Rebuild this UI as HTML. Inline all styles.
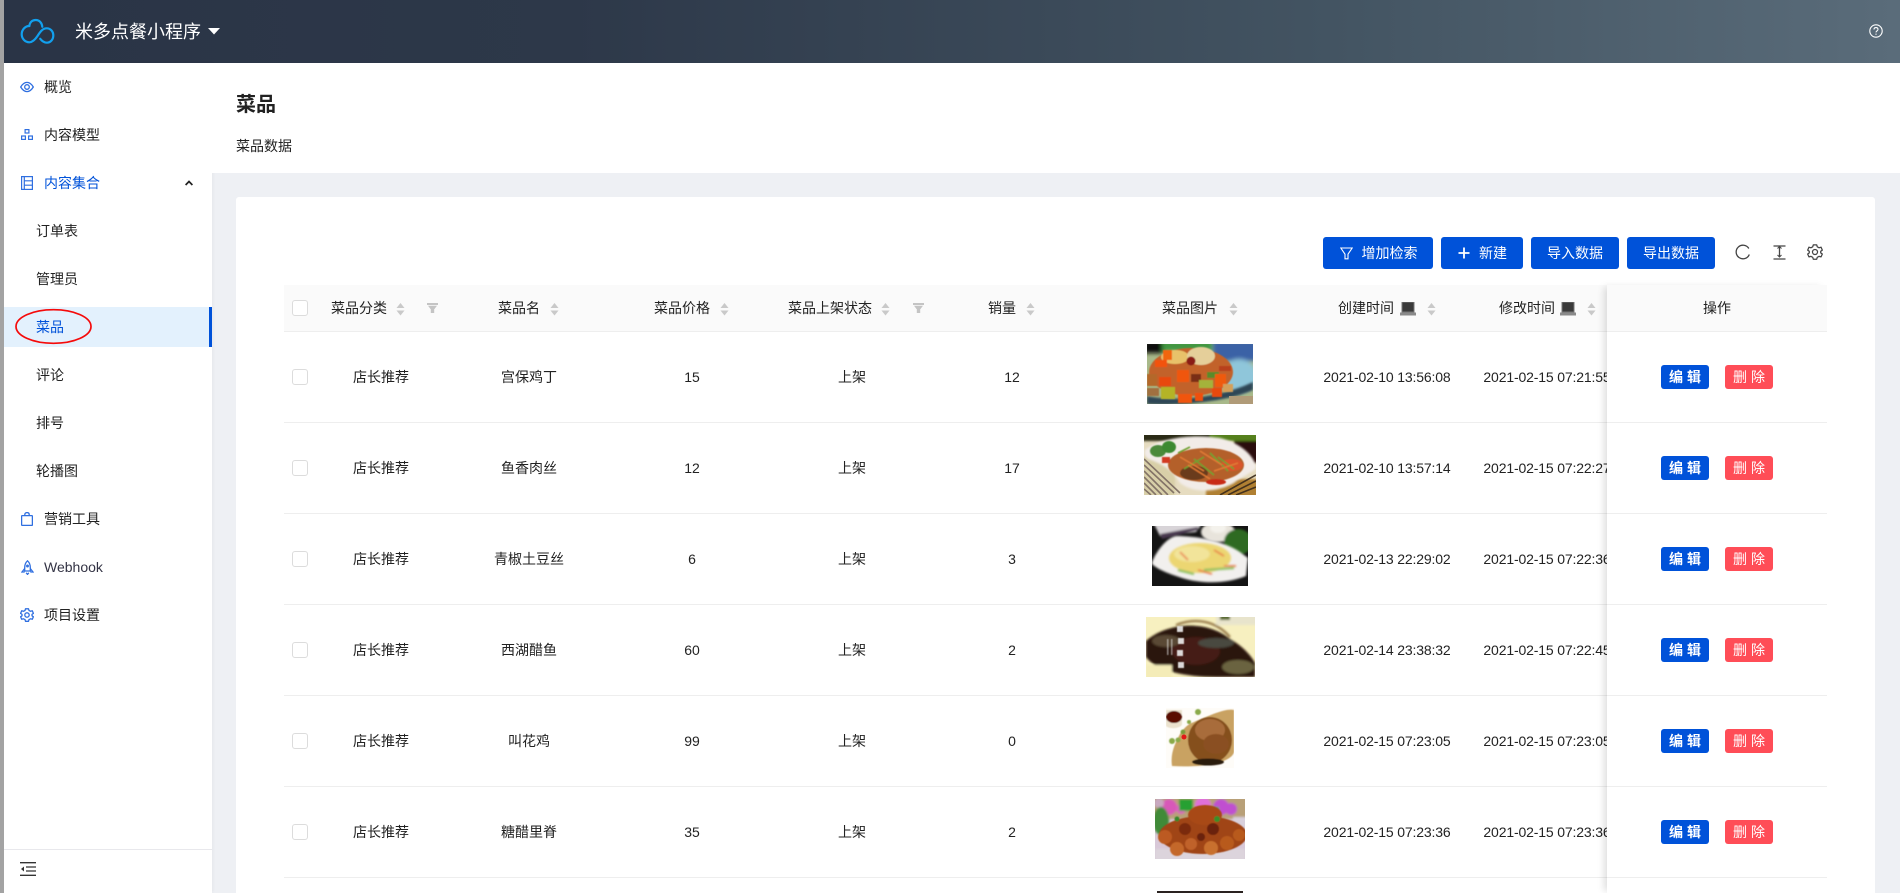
<!DOCTYPE html>
<html lang="zh">
<head>
<meta charset="utf-8">
<title>菜品</title>
<style>
*{box-sizing:border-box}
html,body{margin:0;padding:0;width:1900px;height:893px;overflow:hidden;background:#eef0f4;font-family:"Liberation Sans","Noto Sans CJK SC",sans-serif;font-size:14px;color:#222}
.a{position:absolute}
.strip{left:0;top:0;width:4px;height:893px;background:#a3a3a3;z-index:9}
.top{left:4px;top:0;width:1896px;height:63px;background:linear-gradient(90deg,#2a3446 0%,#2d3849 30%,#435462 70%,#5a6c7a 100%)}
.brand{left:75px;top:19px;font-size:18px;line-height:26px;color:#fff;white-space:nowrap}
.side{left:4px;top:63px;width:208px;height:830px;background:#fff;box-shadow:1px 0 3px rgba(0,0,0,.04)}
.m{left:44px;line-height:20px;height:20px;white-space:nowrap;color:#222}
.s{left:36px;line-height:20px;height:20px;white-space:nowrap;color:#222}
.blue{color:#0052d9}
.ph{left:212px;top:63px;width:1688px;height:110px;background:#fff}
.card{left:236px;top:197px;width:1639px;height:696px;background:#fff;border-radius:3px 3px 0 0}
.th{left:284px;top:285px;width:1543px;height:47px;background:#fafafa;border-bottom:1px solid #eee}
.ln{left:284px;width:1543px;height:1px;background:#eee}
.t{line-height:20px;height:20px;white-space:nowrap}
.c{width:200px;text-align:center;line-height:20px;height:20px;white-space:nowrap}
.cb{left:292px;width:16px;height:16px;border:1px solid #dcdcdc;border-radius:3px;background:#fff}
.btn{top:237px;height:32px;background:#0052d9;border-radius:3px;color:#fff;line-height:32px;text-align:center;white-space:nowrap}
.e,.d{width:48px;height:24px;border-radius:3px;color:#fff;text-align:center;line-height:24px;letter-spacing:4px;padding-left:4px;font-size:14px;font-weight:700}
.e{left:1661px;background:#0052d9}
.d{left:1725px;background:#ff4d57;font-weight:400}
.fix{left:1607px;top:285px;width:220px;height:608px;box-shadow:-5px 0 7px -2px rgba(0,0,0,.13);background:#fff}
.dt{letter-spacing:-.15px;margin-left:-1px}
svg{display:block}
.i{position:absolute;overflow:hidden}
</style>
</head>
<body>
<svg width="0" height="0" style="position:absolute"><defs>
<filter id="b" x="-10%" y="-10%" width="120%" height="120%"><feGaussianBlur stdDeviation="1"/></filter>
<filter id="s" x="-30%" y="-30%" width="160%" height="160%"><feGaussianBlur stdDeviation=".6"/></filter>
<filter id="b2" x="-10%" y="-10%" width="120%" height="120%"><feGaussianBlur stdDeviation="2.2"/></filter>
</defs></svg>

<div class="a strip"></div>
<div class="a top"></div>

<!-- logo -->
<svg class="a" style="left:20px;top:18px" width="36" height="27" viewBox="0 0 36 27" fill="none" stroke="#12a0ee" stroke-width="2.200" stroke-linecap="round">
<path d="M9.300 8C5 8 1.700 12 1.700 16.300C1.700 20.600 5 24.300 9.300 24.300C13 24.300 15.500 21 17.500 18C20 14 22.500 10.300 26.700 10.300C30.500 10.300 33.300 13.500 33.300 17.500C33.300 21.500 30.500 24.700 26.700 24.700C24 24.700 22 23 20.200 20.800"/>
<path d="M9.300 8C9.800 4.500 12 2 15.700 2C19.500 2 22 5 22.300 8.800"/>
</svg>
<div class="a brand">米多点餐小程序</div>
<svg class="a" style="left:208px;top:28px" width="12" height="7" viewBox="0 0 12 7"><path d="M0 0H12L6 6.500Z" fill="#fff"/></svg>
<svg class="a" style="left:1869px;top:24px" width="14" height="14" viewBox="0 0 14 14" fill="none" stroke="#fff" stroke-width="1.100"><circle cx="7" cy="7" r="6.200"/><path d="M5 5.500C5 4.200 6 3.600 7 3.600C8.200 3.600 9 4.400 9 5.400C9 6.800 7 6.800 7 8.400"/><path d="M7 9.600V10.800"/></svg>

<!-- sidebar -->
<div class="a side"></div>
<div class="a" style="left:4px;top:307px;width:208px;height:40px;background:#e3f1fd"></div>
<div class="a" style="left:209px;top:307px;width:3px;height:40px;background:#0052d9"></div>

<svg class="a" style="left:20px;top:81px" width="14" height="12" viewBox="0 0 14 12" fill="none" stroke="#2f6fe0" stroke-width="1.300"><path d="M.7 6C2.500 3 4.500 1.400 7 1.400S11.500 3 13.300 6C11.500 9 9.500 10.600 7 10.600S2.500 9 .7 6Z"/><circle cx="7" cy="6" r="2.300"/></svg>
<div class="a m" style="top:77px">概览</div>

<svg class="a" style="left:21px;top:129px" width="12" height="11" viewBox="0 0 12 11" fill="none" stroke="#2f6fe0" stroke-width="1.200"><rect x="4.100" y=".6" width="3.800" height="3.400"/><rect x=".6" y="7" width="3.800" height="3.400"/><rect x="7.600" y="7" width="3.800" height="3.400"/></svg>
<div class="a m" style="top:125px">内容模型</div>

<svg class="a" style="left:21px;top:176px" width="12" height="14" viewBox="0 0 12 14" fill="none" stroke="#2f6fe0" stroke-width="1.200"><rect x=".6" y=".6" width="10.800" height="12.800"/><path d="M3.300 .6V13.400M3.300 4.800H11.400M3.300 9.200H11.400"/></svg>
<div class="a m blue" style="top:173px">内容集合</div>
<svg class="a" style="left:185px;top:180px" width="8" height="6" viewBox="0 0 8 6" fill="none" stroke="#222" stroke-width="1.700"><path d="M.6 5L4 1.500L7.400 5"/></svg>

<div class="a s" style="top:221px">订单表</div>
<div class="a s" style="top:269px">管理员</div>
<div class="a s blue" style="top:317px">菜品</div>
<svg class="a" style="left:14px;top:308px" width="79" height="37" viewBox="0 0 79 37"><ellipse cx="39.500" cy="18.500" rx="37.500" ry="16.800" fill="none" stroke="#f50a0a" stroke-width="1.700"/></svg>
<div class="a s" style="top:365px">评论</div>
<div class="a s" style="top:413px">排号</div>
<div class="a s" style="top:461px">轮播图</div>

<svg class="a" style="left:21px;top:512px" width="12" height="14" viewBox="0 0 12 14" fill="none" stroke="#2f6fe0" stroke-width="1.300"><rect x=".6" y="3.600" width="10.800" height="9.800" rx=".6"/><path d="M3.800 3.600V2.600C3.800 1.400 4.700 .6 6 .6S8.200 1.400 8.200 2.600V3.600"/></svg>
<div class="a m" style="top:509px">营销工具</div>

<svg class="a" style="left:21px;top:560px" width="13" height="15" viewBox="0 0 13 15" fill="none" stroke="#2f6fe0" stroke-width="1.300"><path d="M6.500 .8C8.500 2.600 9.300 5 9.300 7.500V11H3.700V7.500C3.700 5 4.500 2.600 6.500 .8Z"/><path d="M3.700 8.500L1 12H3.700M9.300 8.500L12 12H9.300M5.200 12.800L6.500 14.400L7.800 12.800"/><circle cx="6.500" cy="6" r=".8"/></svg>
<div class="a m" style="top:557px;color:#334">Webhook</div>

<svg class="a" style="left:20px;top:608px" width="14" height="14" viewBox="0 0 14 14" fill="none" stroke="#2f6fe0" stroke-width="1.300"><path d="M5.500 .8H8.500L9 2.500L10.600 3.300L12.300 2.800L13.400 5.400L12 6.400V7.800L13.400 8.800L12.300 11.300L10.600 10.800L9 11.600L8.500 13.300H5.500L5 11.600L3.400 10.800L1.700 11.300L.6 8.800L2 7.800V6.400L.6 5.400L1.700 2.800L3.400 3.300L5 2.500Z" stroke-linejoin="round"/><circle cx="7" cy="7" r="2.200"/></svg>
<div class="a m" style="top:605px">项目设置</div>

<div class="a" style="left:4px;top:849px;width:208px;height:1px;background:#e8e8ec"></div>
<svg class="a" style="left:20px;top:862px" width="16" height="14" viewBox="0 0 16 14"><path d="M0 .7H16M6 5H16M6 9H16M0 13.300H16" stroke="#333" stroke-width="1.300"/><path d="M4 4.500V9.500L1 7Z" fill="#333"/></svg>

<!-- page header -->
<div class="a ph"></div>
<div class="a" style="left:236px;top:91px;font-size:20px;line-height:28px;font-weight:700;color:#222">菜品</div>
<div class="a t" style="left:236px;top:136px">菜品数据</div>

<!-- card -->
<div class="a card"></div>

<!-- toolbar -->
<div class="a btn" style="left:1323px;width:110px;padding-left:23px">增加检索</div>
<svg class="a" style="left:1340px;top:247px" width="13" height="13" viewBox="0 0 13 13" fill="none" stroke="#fff" stroke-width="1.100"><path d="M.8 1H12.200L8 7.200V11.800H5V7.200Z"/></svg>
<div class="a btn" style="left:1441px;width:82px;padding-left:22px">新建</div>
<svg class="a" style="left:1458px;top:247px" width="12" height="12" viewBox="0 0 12 12"><path d="M6 .5V11.500M.5 6H11.500" stroke="#fff" stroke-width="1.800"/></svg>
<div class="a btn" style="left:1531px;width:88px">导入数据</div>
<div class="a btn" style="left:1627px;width:88px">导出数据</div>

<svg class="a" style="left:1735px;top:244px" width="16" height="16" viewBox="0 0 16 16" fill="none" stroke="#444" stroke-width="1.300"><path d="M13.800 4.500A6.800 6.800 0 1 0 14.300 10.500"/></svg>
<svg class="a" style="left:1773px;top:245px" width="13" height="15" viewBox="0 0 13 15" fill="none" stroke="#444" stroke-width="1.300"><path d="M.5 1H12.500M.5 14H12.500M6.500 1V12"/><path d="M4.500 3.500L6.500 1.500L8.500 3.500M4.500 10L6.500 12L8.500 10" stroke-width="1"/></svg>
<svg class="a" style="left:1807px;top:244px" width="16" height="16" viewBox="0 0 14 14" fill="none" stroke="#444" stroke-width="1.100"><path d="M5.500 .8H8.500L9 2.500L10.600 3.300L12.300 2.800L13.400 5.400L12 6.400V7.800L13.400 8.800L12.300 11.300L10.600 10.800L9 11.600L8.500 13.300H5.500L5 11.600L3.400 10.800L1.700 11.300L.6 8.800L2 7.800V6.400L.6 5.400L1.700 2.800L3.400 3.300L5 2.500Z" stroke-linejoin="round"/><circle cx="7" cy="7" r="2.200"/></svg>

<!-- table head -->
<div class="a th"></div>
<div class="a cb" style="top:300px"></div>
<div class="a t" style="left:331px;top:298px">菜品分类</div>
<div class="a t" style="left:498px;top:298px">菜品名</div>
<div class="a t" style="left:654px;top:298px">菜品价格</div>
<div class="a t" style="left:788px;top:298px">菜品上架状态</div>
<div class="a t" style="left:988px;top:298px">销量</div>
<div class="a t" style="left:1162px;top:298px">菜品图片</div>
<div class="a t" style="left:1338px;top:298px">创建时间</div>
<div class="a t" style="left:1499px;top:298px">修改时间</div>

<svg class="a" style="left:396px;top:303px" width="9" height="13" viewBox="0 0 9 13"><path d="M4.500 0L8.500 5H.5ZM4.500 12.500L8.500 7.500H.5Z" fill="#c9c9c9"/></svg>
<svg class="a" style="left:550px;top:303px" width="9" height="13" viewBox="0 0 9 13"><path d="M4.500 0L8.500 5H.5ZM4.500 12.500L8.500 7.500H.5Z" fill="#c9c9c9"/></svg>
<svg class="a" style="left:720px;top:303px" width="9" height="13" viewBox="0 0 9 13"><path d="M4.500 0L8.500 5H.5ZM4.500 12.500L8.500 7.500H.5Z" fill="#c9c9c9"/></svg>
<svg class="a" style="left:881px;top:303px" width="9" height="13" viewBox="0 0 9 13"><path d="M4.500 0L8.500 5H.5ZM4.500 12.500L8.500 7.500H.5Z" fill="#c9c9c9"/></svg>
<svg class="a" style="left:1026px;top:303px" width="9" height="13" viewBox="0 0 9 13"><path d="M4.500 0L8.500 5H.5ZM4.500 12.500L8.500 7.500H.5Z" fill="#c9c9c9"/></svg>
<svg class="a" style="left:1229px;top:303px" width="9" height="13" viewBox="0 0 9 13"><path d="M4.500 0L8.500 5H.5ZM4.500 12.500L8.500 7.500H.5Z" fill="#c9c9c9"/></svg>
<svg class="a" style="left:1427px;top:303px" width="9" height="13" viewBox="0 0 9 13"><path d="M4.500 0L8.500 5H.5ZM4.500 12.500L8.500 7.500H.5Z" fill="#c9c9c9"/></svg>
<svg class="a" style="left:1587px;top:303px" width="9" height="13" viewBox="0 0 9 13"><path d="M4.500 0L8.500 5H.5ZM4.500 12.500L8.500 7.500H.5Z" fill="#c9c9c9"/></svg>

<svg class="a" style="left:427px;top:303px" width="11" height="10" viewBox="0 0 11 10"><path d="M0 0H11V2H0ZM1 2.800H10L7.500 6H3.500ZM3.800 6H7.200V10H3.800Z" fill="#c4c4c4"/></svg>
<svg class="a" style="left:913px;top:303px" width="11" height="10" viewBox="0 0 11 10"><path d="M0 0H11V2H0ZM1 2.800H10L7.500 6H3.500ZM3.800 6H7.200V10H3.800Z" fill="#c4c4c4"/></svg>

<svg class="a" style="left:1400px;top:302px" width="16" height="14" viewBox="0 0 16 14"><rect x="2" y="0" width="12" height="10" fill="#3a3a3a" stroke="#777" stroke-width="1"/><rect x="0" y="10.500" width="16" height="3" fill="#8a8a8a"/></svg>
<svg class="a" style="left:1560px;top:302px" width="16" height="14" viewBox="0 0 16 14"><rect x="2" y="0" width="12" height="10" fill="#3a3a3a" stroke="#777" stroke-width="1"/><rect x="0" y="10.500" width="16" height="3" fill="#8a8a8a"/></svg>

<!-- rows lines -->
<div class="a ln" style="top:422px"></div>
<div class="a ln" style="top:513px"></div>
<div class="a ln" style="top:604px"></div>
<div class="a ln" style="top:695px"></div>
<div class="a ln" style="top:786px"></div>
<div class="a ln" style="top:877px"></div>

<!-- row 1 -->
<div class="a cb" style="top:369px"></div>
<div class="a c" style="left:281px;top:367px">店长推荐</div>
<div class="a c" style="left:429px;top:367px">宫保鸡丁</div>
<div class="a c" style="left:592px;top:367px">15</div>
<div class="a c" style="left:752px;top:367px">上架</div>
<div class="a c" style="left:912px;top:367px">12</div>
<div class="a c dt" style="left:1288px;top:367px">2021-02-10 13:56:08</div>
<div class="a c dt" style="left:1448px;top:367px">2021-02-15 07:21:55</div>
<!-- row 2 -->
<div class="a cb" style="top:460px"></div>
<div class="a c" style="left:281px;top:458px">店长推荐</div>
<div class="a c" style="left:429px;top:458px">鱼香肉丝</div>
<div class="a c" style="left:592px;top:458px">12</div>
<div class="a c" style="left:752px;top:458px">上架</div>
<div class="a c" style="left:912px;top:458px">17</div>
<div class="a c dt" style="left:1288px;top:458px">2021-02-10 13:57:14</div>
<div class="a c dt" style="left:1448px;top:458px">2021-02-15 07:22:27</div>
<!-- row 3 -->
<div class="a cb" style="top:551px"></div>
<div class="a c" style="left:281px;top:549px">店长推荐</div>
<div class="a c" style="left:429px;top:549px">青椒土豆丝</div>
<div class="a c" style="left:592px;top:549px">6</div>
<div class="a c" style="left:752px;top:549px">上架</div>
<div class="a c" style="left:912px;top:549px">3</div>
<div class="a c dt" style="left:1288px;top:549px">2021-02-13 22:29:02</div>
<div class="a c dt" style="left:1448px;top:549px">2021-02-15 07:22:36</div>
<!-- row 4 -->
<div class="a cb" style="top:642px"></div>
<div class="a c" style="left:281px;top:640px">店长推荐</div>
<div class="a c" style="left:429px;top:640px">西湖醋鱼</div>
<div class="a c" style="left:592px;top:640px">60</div>
<div class="a c" style="left:752px;top:640px">上架</div>
<div class="a c" style="left:912px;top:640px">2</div>
<div class="a c dt" style="left:1288px;top:640px">2021-02-14 23:38:32</div>
<div class="a c dt" style="left:1448px;top:640px">2021-02-15 07:22:45</div>
<!-- row 5 -->
<div class="a cb" style="top:733px"></div>
<div class="a c" style="left:281px;top:731px">店长推荐</div>
<div class="a c" style="left:429px;top:731px">叫花鸡</div>
<div class="a c" style="left:592px;top:731px">99</div>
<div class="a c" style="left:752px;top:731px">上架</div>
<div class="a c" style="left:912px;top:731px">0</div>
<div class="a c dt" style="left:1288px;top:731px">2021-02-15 07:23:05</div>
<div class="a c dt" style="left:1448px;top:731px">2021-02-15 07:23:05</div>
<!-- row 6 -->
<div class="a cb" style="top:824px"></div>
<div class="a c" style="left:281px;top:822px">店长推荐</div>
<div class="a c" style="left:429px;top:822px">糖醋里脊</div>
<div class="a c" style="left:592px;top:822px">35</div>
<div class="a c" style="left:752px;top:822px">上架</div>
<div class="a c" style="left:912px;top:822px">2</div>
<div class="a c dt" style="left:1288px;top:822px">2021-02-15 07:23:36</div>
<div class="a c dt" style="left:1448px;top:822px">2021-02-15 07:23:36</div>

<!-- food images -->
<svg class="i" style="left:1147px;top:344px" width="106" height="60" viewBox="0 0 106 60">
<rect width="106" height="60" fill="#a8b98a"/>
<g filter="url(#b2)">
<rect x="-3" y="-3" width="20" height="12" fill="#0b0f08"/>
<rect x="15" y="-3" width="50" height="10" fill="#3f9640"/>
<rect x="66" y="-3" width="44" height="20" fill="#3a62a6"/>
<ellipse cx="92" cy="32" rx="18" ry="17" fill="#8fc6da"/>
</g>
<path d="M0 52C30 58 72 54 106 38V46C80 58 30 62 0 60Z" fill="#2f4656" filter="url(#b)"/>
<rect x="82" y="52" width="24" height="8" fill="#b09b78"/>
<g filter="url(#s)">
<ellipse cx="44" cy="28" rx="42" ry="24" fill="#c2622a"/>
<ellipse cx="28" cy="13" rx="14" ry="7" fill="#e8c26a"/>
<ellipse cx="54" cy="12" rx="14" ry="9" fill="#e5cf9a"/>
<rect x="8" y="16" width="12" height="7" fill="#f2520c"/>
<rect x="16" y="6" width="9" height="10" fill="#f2660f"/>
<rect x="30" y="26" width="12" height="12" fill="#f0560c"/>
<rect x="12" y="33" width="12" height="9" fill="#e8480c"/>
<rect x="44" y="30" width="10" height="8" fill="#7a2e16"/>
<rect x="52" y="36" width="14" height="8" fill="#a4b23a"/>
<rect x="60" y="28" width="12" height="6" fill="#5a8a2a"/>
<rect x="68" y="30" width="11" height="13" fill="#ef5a0a"/>
<rect x="31" y="50" width="14" height="9" fill="#f0540d"/>
<rect x="48" y="49" width="8" height="8" fill="#ee4f0a"/>
<rect x="14" y="43" width="14" height="12" fill="#b4b428"/>
<rect x="0" y="30" width="10" height="12" fill="#b4682c"/>
<rect x="65" y="44" width="10" height="9" fill="#e84a0a"/>
<circle cx="44" cy="17" r="4.500" fill="#8a1a16"/>
<rect x="72" y="22" width="12" height="5" fill="#b8401c"/>
<rect x="76" y="40" width="10" height="8" fill="#d4a05a"/>
<rect x="0" y="44" width="12" height="8" fill="#a07040"/>
</g>
</svg>

<svg class="i" style="left:1144px;top:435px" width="112" height="60" viewBox="0 0 112 60">
<rect width="112" height="60" fill="#e6dcc0"/>
<g filter="url(#b)">
<rect x="-2" y="-2" width="116" height="8" fill="#2a2a12"/>
<rect x="66" y="-2" width="48" height="8" fill="#54801c"/>
<rect x="90" y="6" width="24" height="22" fill="#2a0c0c"/>
<rect x="-3" y="22" width="34" height="40" fill="#d8cfa8"/>
<rect x="62" y="44" width="52" height="18" fill="#b08030"/>
</g>
<g stroke="#7a6a60" stroke-width="1.600" opacity=".9">
<path d="M0 24L36 58M0 30L30 58M0 36L24 60M0 42L18 60M0 48L12 60M0 54L7 60"/>
<path d="M76 60L112 40M84 60L112 46M92 60L112 52" stroke="#3a2a1a"/>
</g>
<path d="M2 14C20 2 50 -1 76 3C96 8 110 20 112 32C112 36 100 40 90 48C76 56 52 60 36 48C28 34 16 28 4 24C0 20 0 16 2 14Z" fill="#f2ece8" filter="url(#b)"/>
<g filter="url(#s)">
<ellipse cx="62" cy="30" rx="38" ry="17" fill="#b4602c"/>
<ellipse cx="50" cy="38" rx="14" ry="7" fill="#6a3a1c"/>
<ellipse cx="88" cy="30" rx="11" ry="6" fill="#d8552a"/>
<ellipse cx="14" cy="16" rx="8" ry="6" fill="#4b8a3a"/>
<ellipse cx="25" cy="12" rx="7" ry="6" fill="#3e8a32"/>
<path d="M34 18L46 12M50 24L70 40M66 18L84 36M40 34L60 22M74 22L90 34" stroke="#6fa030" stroke-width="1.600"/>
<path d="M36 22L60 36M56 16L78 30M44 30L66 44M70 36L94 28" stroke="#e07a34" stroke-width="1.500"/>
<ellipse cx="72" cy="47" rx="10" ry="3" fill="#c82a18"/>
<rect x="18" y="22" width="8" height="6" fill="#d23a20"/>
</g>
</svg>

<svg class="i" style="left:1152px;top:526px" width="96" height="60" viewBox="0 0 96 60">
<rect width="96" height="60" fill="#141414"/>
<g filter="url(#b)">
<path d="M2 -2H50L44 6L8 10Z" fill="#d8d4d8"/>
<path d="M8 8L46 1L46 4L10 13Z" fill="#4a3850"/>
<ellipse cx="66" cy="6" rx="17" ry="10" fill="#e8e4dc"/>
<ellipse cx="66" cy="2" rx="8" ry="5" fill="#f4f2ec"/>
<ellipse cx="86" cy="16" rx="14" ry="13" fill="#2f6a24"/>
</g>
<path d="M0 36C4 26 14 12 24 10C44 10 70 14 88 26L96 32L94 50C74 58 50 58 30 52C18 48 6 44 0 38Z" fill="#f2f0ee" filter="url(#b)"/>
<g filter="url(#b)">
<ellipse cx="48" cy="32" rx="31" ry="15" fill="#ecd672"/>
<ellipse cx="40" cy="28" rx="18" ry="8" fill="#f2e49a"/>
<path d="M28 26L36 34M62 24L72 30M72 40L84 40M46 44L60 48" stroke="#e8683a" stroke-width="1.500"/>
<path d="M26 44L42 48M52 44L82 42" stroke="#8cc060" stroke-width="2.200"/>
</g>
</svg>

<svg class="i" style="left:1146px;top:617px" width="109" height="60" viewBox="0 0 109 60">
<rect width="109" height="60" fill="#f7f0c0"/>
<g filter="url(#b)">
<rect x="70" y="-2" width="41" height="10" fill="#e8e4cc"/>
<rect x="74" y="-2" width="10" height="5" fill="#5a6a30"/>
<path d="M0 24C20 6 60 2 84 22C98 30 106 40 109 46V60H70C40 60 10 54 0 40Z" fill="#2c1408"/>
<ellipse cx="50" cy="34" rx="24" ry="14" fill="#451a12"/>
<ellipse cx="92" cy="50" rx="16" ry="7" fill="#6a6440"/>
<ellipse cx="20" cy="24" rx="14" ry="6" fill="#5a4a34"/>
<ellipse cx="70" cy="26" rx="18" ry="5" fill="#4a4840"/>
<path d="M30 8C50 0 70 4 84 20" stroke="#8a6a3a" stroke-width="2" fill="none"/>
<rect x="0" y="48" width="26" height="14" fill="#f4ecb8"/>
</g>
<g fill="#eee" filter="url(#s)" opacity=".9">
<rect x="31" y="9" width="6" height="6"/><rect x="32" y="21" width="6" height="6"/><rect x="31" y="33" width="6" height="6"/><rect x="32" y="45" width="6" height="6"/>
<rect x="25" y="22" width="1.500" height="16" opacity=".6"/><rect x="21" y="22" width="1.500" height="16" opacity=".6"/>
</g>
</svg>

<svg class="i" style="left:1166px;top:708px" width="68" height="60" viewBox="0 0 68 60">
<rect width="68" height="60" fill="#fefcf8"/>
<g filter="url(#s)">
<path d="M28 14C42 8 60 0 68 2V44C66 54 40 60 6 58C4 44 10 34 14 26C18 20 22 16 28 14Z" fill="#c9a262"/>
<path d="M0 2H16V16C16 20 4 22 0 18Z" fill="#ebe2ce"/>
<ellipse cx="8" cy="9" rx="8" ry="6" fill="#5a0c04"/>
<ellipse cx="44" cy="32" rx="22" ry="23" fill="#85501f"/>
<ellipse cx="44" cy="22" rx="15" ry="11" fill="#a86c3a"/>
<ellipse cx="50" cy="36" rx="13" ry="10" fill="#8a5020"/>
<ellipse cx="42" cy="54" rx="16" ry="3.500" fill="#2a1a0e"/>
<circle cx="32" cy="4" r="3" fill="#8aaa48"/>
<circle cx="23" cy="14" r="2" fill="#8aaa48"/>
<circle cx="17" cy="24" r="2.500" fill="#7a9c3a"/>
<circle cx="6" cy="33" r="3" fill="#8aaa48"/>
<circle cx="12" cy="32" r="2.500" fill="#8aaa48"/>
</g>
<circle cx="18" cy="29" r="2.500" fill="#e01818"/>
</svg>

<svg class="i" style="left:1155px;top:799px" width="90" height="60" viewBox="0 0 90 60">
<rect width="90" height="60" fill="#d8c8d8"/>
<g filter="url(#b)">
<rect x="-2" y="-2" width="94" height="22" fill="#b8a078"/>
<circle cx="14" cy="8" r="8" fill="#d858b8"/>
<circle cx="4" cy="4" r="5" fill="#c8a8c0"/>
<circle cx="48" cy="6" r="8" fill="#e070d8"/>
<circle cx="66" cy="8" r="8" fill="#c050d0"/>
<circle cx="76" cy="10" r="6" fill="#c050d0"/>
<circle cx="26" cy="10" r="5" fill="#dd60c0"/>
<rect x="24" y="0" width="14" height="12" fill="#28a030"/>
<rect x="50" y="8" width="14" height="6" fill="#38a038"/>
<ellipse cx="6" cy="22" rx="8" ry="14" fill="#3f8a38"/>
<rect x="78" y="18" width="14" height="14" fill="#d8d0dc"/>
<path d="M0 50H90V62H0Z" fill="#dcd4dc"/>
</g>
<g filter="url(#s)">
<ellipse cx="48" cy="36" rx="44" ry="19" fill="#a04414"/>
<ellipse cx="50" cy="16" rx="17" ry="10" fill="#a84a16"/>
<circle cx="10" cy="38" r="7" fill="#bc5a20"/>
<circle cx="22" cy="50" r="7" fill="#c4682a"/>
<circle cx="36" cy="45" r="6" fill="#c0622a"/>
<circle cx="56" cy="49" r="7" fill="#c8702e"/>
<circle cx="72" cy="44" r="7" fill="#b85a1f"/>
<circle cx="84" cy="36" r="6" fill="#b85a1f"/>
<circle cx="30" cy="30" r="6" fill="#7a2a0c"/>
<circle cx="58" cy="30" r="6" fill="#6a220a"/>
<circle cx="46" cy="38" r="4" fill="#6a220a"/>
<circle cx="22" cy="20" r="2.500" fill="#38882a"/>
<circle cx="62" cy="20" r="3" fill="#38902a"/>
</g>
</svg>

<svg class="i" style="left:1157px;top:891px" width="86" height="2" viewBox="0 0 86 2"><rect width="86" height="2" fill="#2a2220"/></svg>

<!-- fixed column -->
<div class="a fix"></div>
<div class="a" style="left:1607px;top:285px;width:220px;height:47px;background:#fafafa;border-bottom:1px solid #eee"></div>
<div class="a c" style="left:1617px;top:298px">操作</div>
<div class="a ln" style="left:1607px;width:220px;top:422px"></div>
<div class="a ln" style="left:1607px;width:220px;top:513px"></div>
<div class="a ln" style="left:1607px;width:220px;top:604px"></div>
<div class="a ln" style="left:1607px;width:220px;top:695px"></div>
<div class="a ln" style="left:1607px;width:220px;top:786px"></div>
<div class="a ln" style="left:1607px;width:220px;top:877px"></div>

<div class="a e" style="top:365px">编辑</div><div class="a d" style="top:365px">删除</div>
<div class="a e" style="top:456px">编辑</div><div class="a d" style="top:456px">删除</div>
<div class="a e" style="top:547px">编辑</div><div class="a d" style="top:547px">删除</div>
<div class="a e" style="top:638px">编辑</div><div class="a d" style="top:638px">删除</div>
<div class="a e" style="top:729px">编辑</div><div class="a d" style="top:729px">删除</div>
<div class="a e" style="top:820px">编辑</div><div class="a d" style="top:820px">删除</div>
</body>
</html>
